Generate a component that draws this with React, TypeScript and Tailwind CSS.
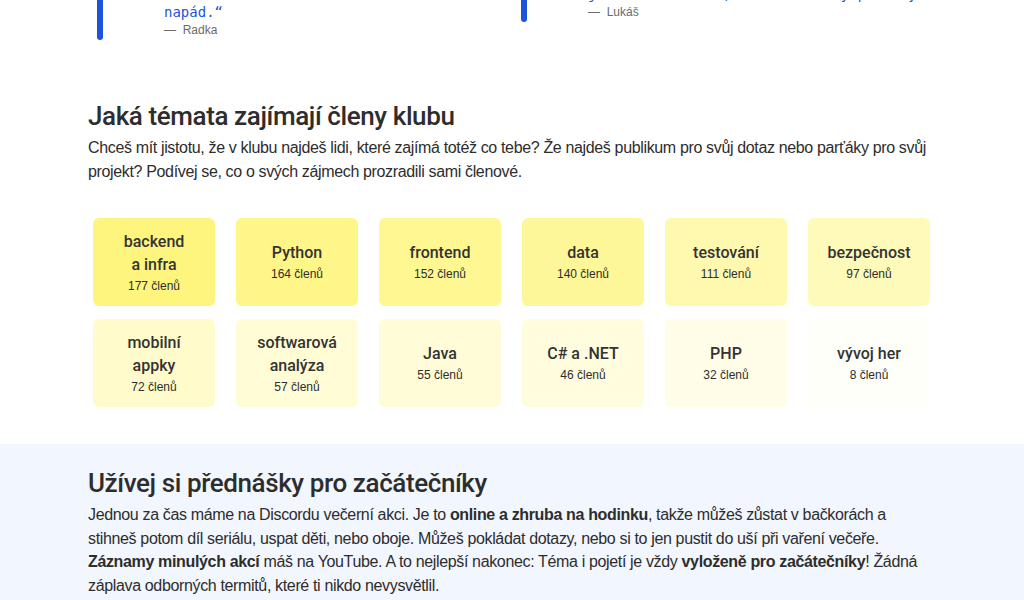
import React from 'react';

// topics members are interested in; tile colour strength follows member count
const TOPICS = [
  { name: ['backend', 'a infra'], count: 177 },
  { name: ['Python'], count: 164 },
  { name: ['frontend'], count: 152 },
  { name: ['data'], count: 140 },
  { name: ['testování'], count: 111 },
  { name: ['bezpečnost'], count: 97 },
  { name: ['mobilní', 'appky'], count: 72 },
  { name: ['softwarová', 'analýza'], count: 57 },
  { name: ['Java'], count: 55 },
  { name: ['C# a .NET'], count: 46 },
  { name: ['PHP'], count: 32 },
  { name: ['vývoj her'], count: 8 },
];

const MAX = Math.max(...TOPICS.map((t) => t.count));

function Quote({ lines, author, shift }: { lines: string[]; author: string; shift: string }) {
  return (
    <div className={`flex ${shift}`}>
      <div className="w-[6px] rounded-full bg-[#1b55d9] shrink-0" />
      <div className="pl-[61px] pb-[2px]">
        <p className="font-['DejaVu_Sans_Mono',monospace] text-[14px] leading-[20px] text-[#1f55d6] whitespace-nowrap">
          {lines.map((l, i) => (
            <span key={i} className="block">{l}</span>
          ))}
        </p>
        <p className="text-[12px] leading-[16px] text-[#6b6b6b]">—&nbsp; {author}</p>
      </div>
    </div>
  );
}

export default function App() {
  return (
    <div className="min-h-screen bg-white font-['Liberation_Sans',Arial,sans-serif] text-[#2d2d2d]">
      {/* === QUOTES (scrolled past) === */}
      <div className="h-[40px] overflow-hidden">
        <div className="mx-auto w-[848px] grid grid-cols-2 gap-4 items-start">
          <div className="ml-[9px]">
            <Quote
              shift="-mt-[38px]"
              lines={['„Klub mi dal odvahu jít do toho. A', 'taky spoustu typů, kde se jít ptát na', 'napád.“']}
              author="Radka"
            />
          </div>
          <div className="ml-[1px]">
            <Quote
              shift="-mt-[36px]"
              lines={['„Přišel jsem na jednu otázku a zůstal', 'jsem kvůli lidem, kteří mi vždy pomohly']}
              author="Lukáš"
            />
          </div>
        </div>
      </div>

      {/* === TOPICS === */}
      <section className="pt-[61px] pb-[37px]">
        <div className="mx-auto w-[848px]">
          <h2 className="font-['Roboto',sans-serif] text-[26px] leading-[31px] font-medium tracking-[-0.4px]">Jaká témata zajímají členy klubu</h2>
          <p className="mt-[4px] text-[16px] leading-[24px] tracking-[-0.35px]">
            Chceš mít jistotu, že v klubu najdeš lidi, které zajímá totéž co tebe? Že najdeš publikum pro svůj dotaz nebo parťáky pro svůj projekt? Podívej se, co o svých zájmech prozradili sami členové.
          </p>

          <div className="mt-[34px] ml-[5px] w-[837px] grid grid-cols-6 gap-x-[21px] gap-y-[13px]">
            {TOPICS.map((t) => (
              <div
                key={t.name.join(' ')}
                className="h-[88px] rounded-md flex flex-col items-center justify-center text-center"
                style={{ backgroundColor: `rgba(253, 236, 0, ${(0.5 * t.count) / MAX})` }}
              >
                {t.name.map((n) => (
                  <span key={n} className="font-['Roboto',sans-serif] text-[16px] leading-[23px] font-medium text-[#333]">{n}</span>
                ))}
                <span className="text-[12px] leading-[18px] mt-[1px]">{t.count} členů</span>
              </div>
            ))}
          </div>
        </div>
      </section>

      {/* === TALKS FOR BEGINNERS === */}
      <section className="bg-[#f2f6fe] pt-[24px] pb-[40px]">
        <div className="mx-auto w-[848px]">
          <h2 className="font-['Roboto',sans-serif] text-[26px] leading-[31px] font-medium tracking-[-0.4px]">Užívej si přednášky pro začátečníky</h2>
          <p className="mt-[4px] text-[16px] leading-[23.5px] tracking-[-0.35px]">
            Jednou za čas máme na Discordu večerní akci. Je to <strong>online a zhruba na hodinku</strong>, takže můžeš zůstat v bačkorách a stihneš potom díl seriálu, uspat děti, nebo oboje. Můžeš pokládat dotazy, nebo si to jen pustit do uší při vaření večeře. <strong>Záznamy minulých akcí</strong> máš na YouTube. A to nejlepší nakonec: Téma i pojetí je vždy <strong>vyloženě pro začátečníky</strong>! Žádná záplava odborných termitů, které ti nikdo nevysvětlil.
          </p>
        </div>
      </section>
    </div>
  );
}
